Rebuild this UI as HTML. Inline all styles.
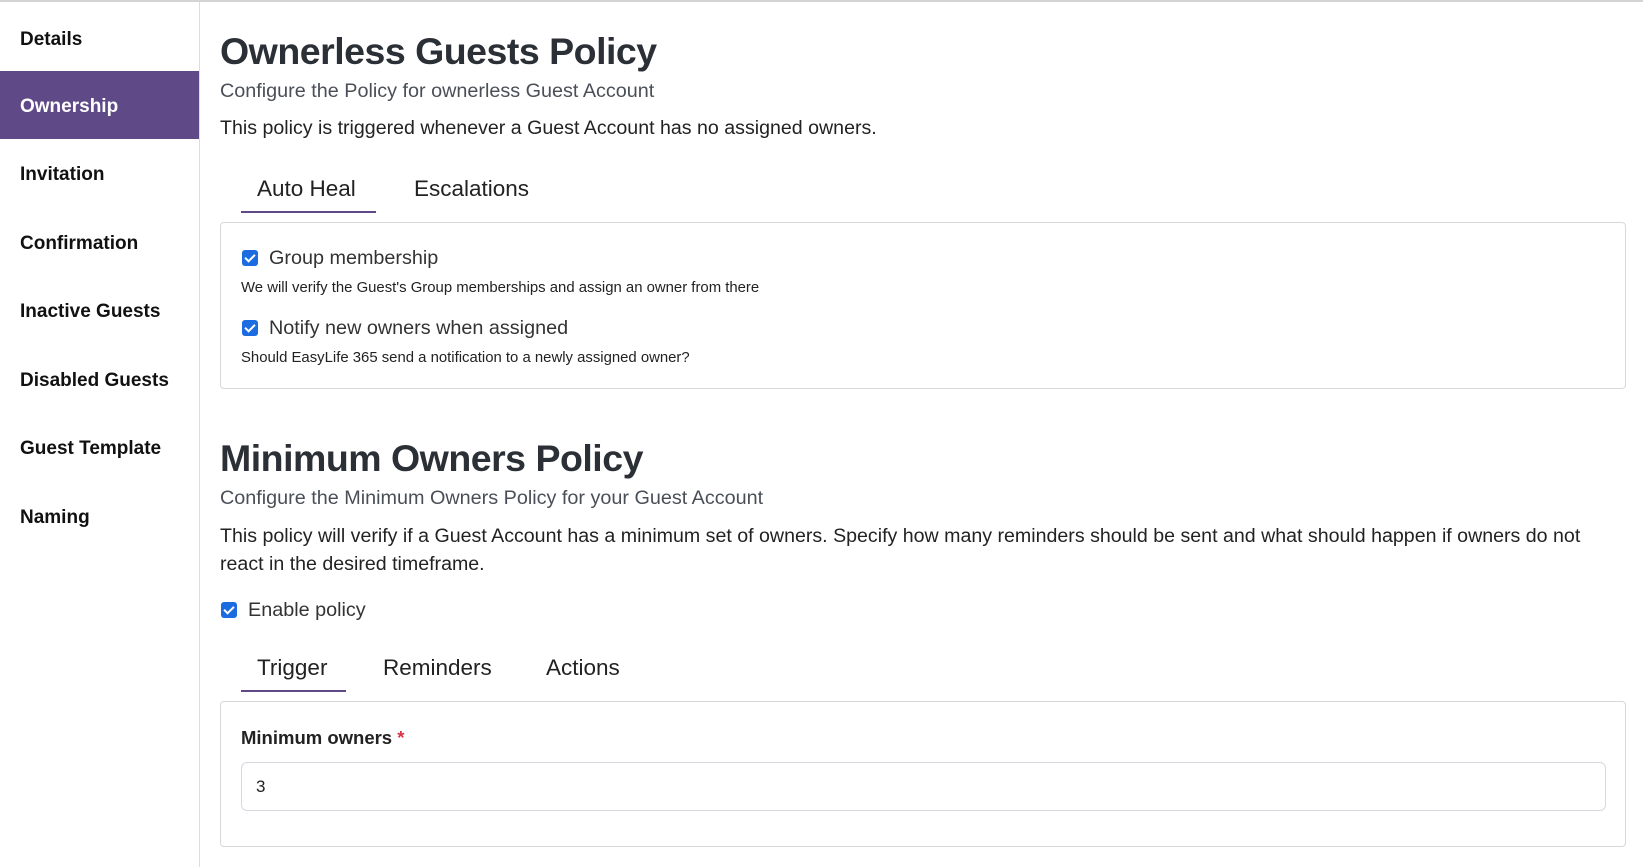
<!DOCTYPE html>
<html><head><meta charset="utf-8"><style>
*{box-sizing:border-box;margin:0;padding:0}
body{width:1643px;height:867px;overflow:hidden;background:#fff;font-family:"Liberation Sans",sans-serif;color:#222;position:relative}
.top{position:absolute;left:0;top:0;width:1643px;height:2px;background:#d4d4d4}
.side{position:absolute;left:0;top:2px;width:200px;height:865px;border-right:1px solid #ddd}
.item{position:absolute;left:0;width:199px;height:68px;line-height:72px;padding-left:20px;font-weight:bold;font-size:19px;color:#111}
.item.act{background:#5f4a87;color:#fff}
.a{position:absolute;white-space:nowrap}
h1{position:absolute;left:220px;font-size:37.5px;font-weight:bold;color:#2b2f36;white-space:nowrap;letter-spacing:-0.5px}
.sub{font-size:19.8px;color:#4a4f57}
.txt{font-size:19.6px;color:#222}
.tab{font-size:22.5px;color:#222}
.ul{position:absolute;height:2px;background:#5f4a87}
.box{position:absolute;left:220px;width:1406px;border:1px solid #d8d8d8;border-radius:4px}
.cb{position:absolute;width:16px;height:16px;background:#1a6ce0;border-radius:3px}
.cb:after{content:"";position:absolute;left:5px;top:2px;width:4px;height:8px;border:solid #fff;border-width:0 2px 2px 0;transform:rotate(45deg)}
.lab{font-size:19.8px;color:#333}
.help{font-size:14.9px;color:#222}
</style></head><body>
<div class="top"></div>
<div class="side">
<div class="item" style="top:2px">Details</div>
<div class="item act" style="top:69px">Ownership</div>
<div class="item" style="top:137px">Invitation</div>
<div class="item" style="top:206px">Confirmation</div>
<div class="item" style="top:274px">Inactive Guests</div>
<div class="item" style="top:343px">Disabled Guests</div>
<div class="item" style="top:411px">Guest Template</div>
<div class="item" style="top:480px">Naming</div>
</div>

<h1 style="top:30px">Ownerless Guests Policy</h1>
<div class="a sub" style="left:220px;top:80px">Configure the Policy for ownerless Guest Account</div>
<div class="a txt" style="left:220px;top:117px">This policy is triggered whenever a Guest Account has no assigned owners.</div>
<div class="a tab" style="left:257px;top:176px">Auto Heal</div>
<div class="a tab" style="left:414px;top:176px">Escalations</div>
<div class="ul" style="left:241px;top:211px;width:135px"></div>
<div class="box" style="top:222px;height:167px"></div>
<div class="cb" style="left:242px;top:250px"></div>
<div class="a lab" style="left:269px;top:247px">Group membership</div>
<div class="a help" style="left:241px;top:280px">We will verify the Guest's Group memberships and assign an owner from there</div>
<div class="cb" style="left:242px;top:320px"></div>
<div class="a lab" style="left:269px;top:317px">Notify new owners when assigned</div>
<div class="a help" style="left:241px;top:350px">Should EasyLife 365 send a notification to a newly assigned owner?</div>

<h1 style="top:437px">Minimum Owners Policy</h1>
<div class="a sub" style="left:220px;top:487px">Configure the Minimum Owners Policy for your Guest Account</div>
<div class="a txt" style="left:220px;top:522px;line-height:28px;white-space:normal;width:1390px">This policy will verify if a Guest Account has a minimum set of owners. Specify how many reminders should be sent and what should happen if owners do not react in the desired timeframe.</div>
<div class="cb" style="left:221px;top:602px"></div>
<div class="a lab" style="left:248px;top:599px">Enable policy</div>
<div class="a tab" style="left:257px;top:655px">Trigger</div>
<div class="a tab" style="left:383px;top:655px">Reminders</div>
<div class="a tab" style="left:546px;top:655px">Actions</div>
<div class="ul" style="left:241px;top:690px;width:105px"></div>
<div class="box" style="top:701px;height:146px"></div>
<div class="a" style="left:241px;top:727px;font-size:18.5px;font-weight:bold;color:#222">Minimum owners <span style="color:#d9334a">*</span></div>
<div class="a" style="left:241px;top:762px;width:1365px;height:49px;border:1px solid #d8d8e0;border-radius:6px"></div>
<div class="a" style="left:256px;top:777px;font-size:17px;color:#222">3</div>
</body></html>
